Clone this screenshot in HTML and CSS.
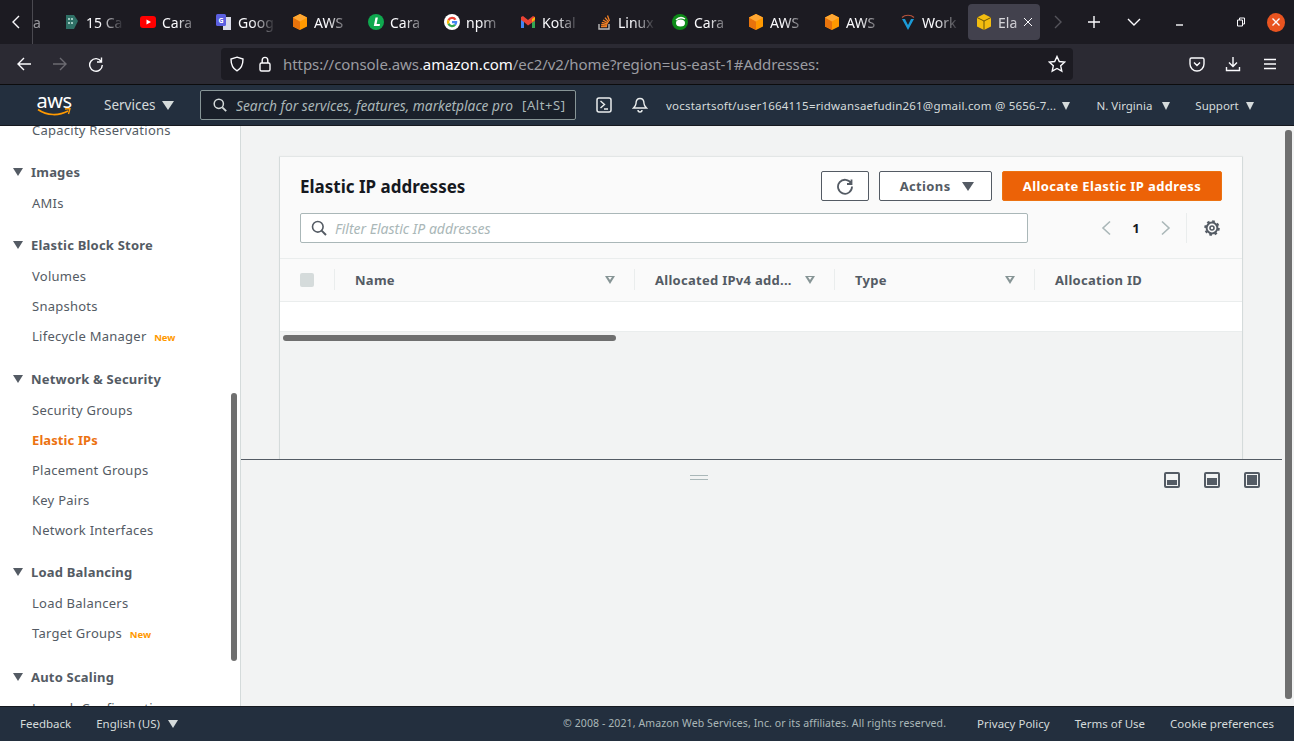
FILE: index.html
```html
<!DOCTYPE html>
<html lang="en">
<head>
  <meta charset="UTF-8">
  <meta name="viewport" content="width=device-width, initial-scale=1.0">
  <title>Elastic IP addresses</title>
  <link rel="stylesheet" href="styles.css">
</head>
<body>
  <svg class="defs" width="0" height="0">
    <symbol id="cube" viewBox="0 0 16 16">
      <path d="M8 0l7 3.600v8.800L8 16l-7-3.600V3.600z" fill="#f90"/>
      <path d="M8 7.400V16l-7-3.600V3.600z" fill="#e8730c"/>
      <path d="M8 7.400L1 3.600 8 0l7 3.600z" fill="#ffa733"/>
    </symbol>
  </svg>

  <!-- tabs -->
  <div class="tabbar">
    <span class="tabs-back">
      <svg width="16" height="16" viewBox="0 0 16 16"><path d="M11 2L5 8l6 6" class="ln"/></svg>
    </span>
    <div class="tabs">
      <div class="tab tab-cut"><span class="tab-text-end">a</span></div>
      <div class="tab">
        <svg class="fav" viewBox="0 0 16 16"><path d="M2 1h8l4 6-4 8H2z" fill="#2f7066"/><path d="M4 4h2v2H4zM7 4h2v2H7zM4 8h2v2H4zM7 8h2v2H7z" fill="#9fc9c0"/></svg>
        <span class="tab-text">15 Ca</span>
      </div>
      <div class="tab">
        <svg class="fav" viewBox="0 0 16 16"><rect y="2" width="16" height="12" rx="3" fill="#f00"/><path d="M6.500 5.500L11 8l-4.500 2.500z" fill="#fff"/></svg>
        <span class="tab-text">Cara</span>
      </div>
      <div class="tab">
        <svg class="fav" viewBox="0 0 16 16"><path d="M7 3h8v13H7z" fill="#d9dbe8"/><rect width="10" height="12" rx="1.500" fill="#5b5fe0"/><text x="5" y="9" class="fav-g">G</text></svg>
        <span class="tab-text">Goog</span>
      </div>
      <div class="tab"><svg class="fav"><use href="#cube"/></svg><span class="tab-text">AWS</span></div>
      <div class="tab">
        <svg class="fav" viewBox="0 0 16 16"><circle cx="8" cy="8" r="8" fill="#0fa84f"/><path d="M7.500 3.500h2.400L8.600 10H12l-.4 2H5.800z" fill="#fff"/></svg>
        <span class="tab-text">Cara</span>
      </div>
      <div class="tab">
        <svg class="fav" viewBox="0 0 16 16"><circle cx="8" cy="8" r="8" fill="#fff"/><path d="M12.500 5.200A5.200 5.200 0 0 0 8 2.800a5.200 5.200 0 0 0-4.500 2.600l2 1.500A2.700 2.700 0 0 1 10.300 6.300z" fill="#ea4335"/><path d="M3.500 5.400a5.200 5.200 0 0 0 0 5.200l2-1.500a2.700 2.700 0 0 1 0-2.200z" fill="#fbbc05"/><path d="M3.500 10.600A5.200 5.200 0 0 0 12 11.500l-1.900-1.500A2.700 2.700 0 0 1 5.500 9.100z" fill="#34a853"/><path d="M13.200 7H8v2.200h2.900A2.700 2.700 0 0 1 10.100 10l1.900 1.500A5.200 5.200 0 0 0 13.200 7z" fill="#4285f4"/></svg>
        <span class="tab-text">npm</span>
      </div>
      <div class="tab">
        <svg class="fav" viewBox="0 0 16 16"><path d="M1 3v11h3V7z" fill="#4285f4"/><path d="M15 3v11h-3V7z" fill="#34a853"/><path d="M1 3l2-1 5 4 5-4 2 1v4l-2 1-5 3.500L4 8 1 6z" fill="#ea4335"/><path d="M12 8l3-2.500V3l-3 2z" fill="#fbbc05"/></svg>
        <span class="tab-text">Kotal</span>
      </div>
      <div class="tab">
        <svg class="fav" viewBox="0 0 16 16"><path d="M3 10v5h10v-5" fill="none" stroke="#bcbbbb" stroke-width="1.400"/><path d="M5 12.500h6M5.200 10.500l6 .6M5.800 8.300l5.800 1.500M7 6l5.200 3M9 3.600l3.800 4.600M11.500 1.500l2 5.500" stroke="#f48024" stroke-width="1.300" fill="none"/></svg>
        <span class="tab-text">Linux</span>
      </div>
      <div class="tab">
        <svg class="fav" viewBox="0 0 16 16"><circle cx="8" cy="8" r="8" fill="#0c8a17"/><ellipse cx="8.500" cy="9" rx="4.500" ry="3.500" fill="#fff"/><path d="M4 6c3-3 6-3 9-1" stroke="#fff" stroke-width="1.500" fill="none"/></svg>
        <span class="tab-text">Cara</span>
      </div>
      <div class="tab"><svg class="fav"><use href="#cube"/></svg><span class="tab-text">AWS</span></div>
      <div class="tab"><svg class="fav"><use href="#cube"/></svg><span class="tab-text">AWS</span></div>
      <div class="tab">
        <svg class="fav" viewBox="0 0 16 16"><path d="M2 5l6 11 6-11h-3l-3 6-3-6z" fill="#1b9ad6"/><path d="M2 3.500C5 .5 11 .5 14 3.500" stroke="#b5533c" stroke-width="1.200" fill="none"/></svg>
        <span class="tab-text">Work</span>
      </div>
      <div class="tab tab-active">
        <svg class="fav" viewBox="0 0 16 16"><path d="M8 0l7 3.500v9L8 16l-7-3.500v-9z" fill="#f3bd10"/><path d="M1 3.500L8 7l7-3.500M8 7v9" stroke="#5e4a08" stroke-width=".9" fill="none"/></svg>
        <span class="tab-text tab-text-short">Ela</span>
        <svg class="tab-close" width="10" height="10" viewBox="0 0 10 10"><path d="M1 1l8 8M9 1L1 9" class="ln ln-thin"/></svg>
      </div>
    </div>
    <div class="tabs-tools">
      <svg class="tool-next" width="16" height="16" viewBox="0 0 16 16"><path d="M5 2l6 6-6 6" stroke="#55545b" stroke-width="1.400" fill="none"/></svg>
      <svg class="tool-plus" width="14" height="14" viewBox="0 0 14 14"><path d="M7 1v12M1 7h12" class="ln"/></svg>
      <svg class="tool-list" width="14" height="14" viewBox="0 0 14 14"><path d="M1 4l6 6 6-6" class="ln"/></svg>
    </div>
    <div class="winbtns">
      <svg width="10" height="10" viewBox="0 0 10 10"><path d="M1 8h7" class="ln"/></svg>
      <svg width="10" height="10" viewBox="0 0 10 10"><path d="M1.500 3h5v6h-5zM3.500 3V1h5v6h-2" class="ln ln-thin"/></svg>
      <span class="win-close"><svg width="10" height="10" viewBox="0 0 10 10"><path d="M1.500 1.500l7 7M8.500 1.500l-7 7" class="ln"/></svg></span>
    </div>
  </div>

  <!-- browser nav -->
  <div class="navbar">
    <div class="nav-btns">
      <svg width="16" height="16" viewBox="0 0 16 16"><path d="M15 8H2M8 2L2 8l6 6" class="ln"/></svg>
      <svg width="16" height="16" viewBox="0 0 16 16"><path d="M1 8h13M8 2l6 6-6 6" stroke="#6c6b72" stroke-width="1.400" fill="none"/></svg>
      <svg width="16" height="16" viewBox="0 0 16 16"><path d="M13.500 1.500V6H9M13.300 5.500A6.300 6.300 0 1 0 14.300 9" class="ln"/></svg>
    </div>
    <div class="urlbar">
      <svg class="url-shield" width="16" height="16" viewBox="0 0 16 16"><path d="M8 1.200l6 1.800c0 6-1.500 9.500-6 11.800C3.500 12.500 2 9 2 3z" class="ln"/></svg>
      <svg class="url-lock" width="14" height="16" viewBox="0 0 14 16"><rect x="2" y="7" width="10" height="8" rx="1.500" class="ln"/><path d="M4.200 7V4.200a2.800 2.800 0 0 1 5.600 0V7" class="ln"/></svg>
      <span class="url-text">https://console.aws.<b>amazon.com</b>/ec2/v2/home?region=us-east-1#Addresses:</span>
      <svg class="url-star" width="18" height="18" viewBox="0 0 18 18"><path d="M9 1.500l2.300 5 5.400.6-4 3.700 1.100 5.400L9 13.500l-4.800 2.700 1.100-5.400-4-3.700 5.400-.6z" class="ln"/></svg>
    </div>
    <div class="nav-right">
      <svg width="16" height="16" viewBox="0 0 16 16"><path d="M2.500 2h11A1.500 1.500 0 0 1 15 3.500V8A7 7 0 0 1 1 8V3.500A1.500 1.500 0 0 1 2.500 2zM5 6.500l3 3 3-3" class="ln"/></svg>
      <svg width="16" height="16" viewBox="0 0 16 16"><path d="M8 1v9M4 6.500L8 10.500l4-4M1.500 11v3.500h13V11" class="ln"/></svg>
      <svg class="nav-menu" width="14" height="14" viewBox="0 0 14 14"><path d="M1 2.500h12M1 7h12M1 11.500h12" class="ln"/></svg>
    </div>
  </div>

  <!-- aws header -->
  <header class="awsbar">
    <div class="aws-logo">
      <span class="aws-word">aws</span>
      <svg width="34" height="9" viewBox="0 0 34 9"><path d="M1 1.500c9 6.500 21 6.500 30 1.500" stroke="#f90" stroke-width="1.600" fill="none"/><path d="M28 1l5-.5L31.500 6" stroke="#f90" stroke-width="1.400" fill="none"/></svg>
    </div>
    <span class="aws-services">Services <i class="caret caret-lt"></i></span>
    <div class="aws-search">
      <svg width="14" height="14" viewBox="0 0 14 14"><circle cx="5.800" cy="5.800" r="4.600" stroke="#d5dbdb" stroke-width="1.500" fill="none"/><path d="M9.300 9.300L13.200 13.200" stroke="#d5dbdb" stroke-width="1.800"/></svg>
      <span class="aws-search-text">Search for services, features, marketplace pro</span>
      <span class="aws-search-key">[Alt+S]</span>
    </div>
    <svg class="aws-term" width="16" height="16" viewBox="0 0 16 16"><rect x="1" y="1" width="14" height="14" rx="2" stroke="#eaeded" stroke-width="1.500" fill="none"/><path d="M4.500 4l4 3.500-4 3.500M8 12h4" stroke="#eaeded" stroke-width="1.400" fill="none"/></svg>
    <svg class="aws-bell" width="16" height="16" viewBox="0 0 16 16"><path d="M8 1.500c3 0 4 2.500 4 5 0 2 1 3 2.500 4.500h-13C3 9.500 4 8.500 4 6.500c0-2.500 1-5 4-5zM6 13a2 2 0 0 0 4 0" stroke="#eaeded" stroke-width="1.400" fill="none"/></svg>
    <span class="aws-account">vocstartsoft/user1664115=ridwansaefudin261@gmail.com @ 5656-7... <i class="caret caret-sm"></i></span>
    <span class="aws-region">N. Virginia <i class="caret caret-sm"></i></span>
    <span class="aws-support">Support <i class="caret caret-sm"></i></span>
  </header>

  <div class="main">
    <nav class="sidebar">
      <div class="side-scroll">
        <div class="side-group side-first">
          <a class="side-item">Capacity Reservations</a>
        </div>
        <div class="side-group">
          <h4 class="side-head"><i class="caret caret-dk"></i>Images</h4>
          <a class="side-item">AMIs</a>
        </div>
        <div class="side-group">
          <h4 class="side-head"><i class="caret caret-dk"></i>Elastic Block Store</h4>
          <a class="side-item">Volumes</a>
          <a class="side-item">Snapshots</a>
          <a class="side-item">Lifecycle Manager <em>New</em></a>
        </div>
        <div class="side-group side-push1">
          <h4 class="side-head"><i class="caret caret-dk"></i>Network &amp; Security</h4>
          <a class="side-item">Security Groups</a>
          <a class="side-item side-active">Elastic IPs</a>
          <a class="side-item">Placement Groups</a>
          <a class="side-item">Key Pairs</a>
          <a class="side-item">Network Interfaces</a>
        </div>
        <div class="side-group">
          <h4 class="side-head"><i class="caret caret-dk"></i>Load Balancing</h4>
          <a class="side-item">Load Balancers</a>
          <a class="side-item">Target Groups <em>New</em></a>
        </div>
        <div class="side-group side-push2">
          <h4 class="side-head"><i class="caret caret-dk"></i>Auto Scaling</h4>
          <a class="side-item">Launch Configurations</a>
        </div>
      </div>
      <span class="side-thumb"></span>
    </nav>

    <section class="content">
      <div class="upper">
        <div class="card">
          <div class="card-head">
            <div class="card-row">
              <h1 class="card-title">Elastic IP addresses</h1>
              <button class="btn btn-icon"><svg width="18" height="18" viewBox="0 0 18 18"><path d="M15.500 2.500V7H11M15.200 6.500A7 7 0 1 0 16 9.500" stroke="#545b64" stroke-width="1.800" fill="none"/></svg></button>
              <button class="btn btn-actions">Actions <i class="caret caret-dk caret-lg"></i></button>
              <button class="btn btn-primary">Allocate Elastic IP address</button>
            </div>
            <div class="card-row card-row-filter">
              <div class="filter">
                <svg width="16" height="16" viewBox="0 0 16 16"><circle cx="6.800" cy="6.800" r="5.300" stroke="#545b64" stroke-width="1.600" fill="none"/><path d="M10.600 10.600L15 15" stroke="#545b64" stroke-width="2"/></svg>
                <span>Filter Elastic IP addresses</span>
              </div>
              <div class="pager">
                <svg width="12" height="16" viewBox="0 0 12 16"><path d="M10 1.500L3 8l7 6.500" stroke="#aab7b8" stroke-width="1.600" fill="none"/></svg>
                <b>1</b>
                <svg width="12" height="16" viewBox="0 0 12 16"><path d="M2 1.500L9 8l-7 6.500" stroke="#aab7b8" stroke-width="1.600" fill="none"/></svg>
              </div>
              <div class="prefs">
                <svg width="16" height="16" viewBox="0 0 16 16"><circle cx="8" cy="8" r="5.400" stroke="#545b64" stroke-width="2" fill="none"/><circle cx="8" cy="8" r="6.800" stroke="#545b64" stroke-width="2" stroke-dasharray="2.600 2.740" fill="none"/><circle cx="8" cy="8" r="2" stroke="#545b64" stroke-width="1.600" fill="none"/></svg>
              </div>
            </div>
          </div>
          <div class="thead">
            <div class="th th-check"><span class="check"></span></div>
            <div class="th"><span class="th-label">Name</span><i class="sort"></i></div>
            <div class="th"><span class="th-label">Allocated IPv4 add...</span><i class="sort"></i></div>
            <div class="th"><span class="th-label">Type</span><i class="sort"></i></div>
            <div class="th"><span class="th-label">Allocation ID</span></div>
          </div>
          <div class="tbody"></div>
          <div class="hscroll"><span class="hthumb"></span></div>
        </div>
      </div>
      <div class="split">
        <span class="split-grip"></span>
        <div class="split-tools">
          <span class="pos"><i class="pos-low"></i></span>
          <span class="pos"><i class="pos-mid"></i></span>
          <span class="pos"><i class="pos-full"></i></span>
        </div>
      </div>
      <span class="main-thumb"></span>
    </section>
  </div>

  <footer class="footer">
    <a class="foot-feedback">Feedback</a>
    <a class="foot-lang">English (US) <i class="caret caret-lt"></i></a>
    <span class="foot-copy">© 2008 - 2021, Amazon Web Services, Inc. or its affiliates. All rights reserved.</span>
    <a class="foot-link foot-first">Privacy Policy</a>
    <a class="foot-link">Terms of Use</a>
    <a class="foot-link">Cookie preferences</a>
  </footer>
</body>
</html>
```

FILE: styles.css
```css
* {
  margin: 0;
  padding: 0;
  box-sizing: border-box;
}

html, body {
  height: 741px;
  overflow: hidden;
}

body {
  display: flex;
  flex-direction: column;
  font-family: "Noto Sans", "Liberation Sans", sans-serif;
  font-size: 13px;
  color: #545b64;
  background-color: #f2f3f3;
}

.defs {
  position: absolute;
}

.ln {
  stroke: #fbfbfe;
  stroke-width: 1.400;
  fill: none;
}

.ln-thin {
  stroke-width: 1;
}

/* carets */
.caret {
  display: inline-block;
  width: 0;
  height: 0;
  border-left: 6px solid transparent;
  border-right: 6px solid transparent;
  border-top: 9px solid #d5dbdb;
}

.caret-lt {
  border-left-width: 5px;
  border-right-width: 5px;
  border-top-width: 8px;
}

.caret-sm {
  border-left-width: 4.500px;
  border-right-width: 4.500px;
  border-top-width: 8px;
}

.caret-dk {
  border-top-color: #545b64;
  border-left-width: 5px;
  border-right-width: 5px;
  border-top-width: 8px;
}

/* browser tabs */
.tabbar {
  display: flex;
  align-items: center;
  height: 44px;
  flex: none;
  background-color: #1c1b22;
  overflow: hidden;
}

.tabs-back {
  display: flex;
  width: 33px;
  height: 44px;
  flex: none;
  align-items: center;
  justify-content: center;
  border-right: 1px solid #4a4950;
}

.tabs {
  display: flex;
  width: 1064px;
  flex: none;
  margin-left: -53px;
}

.tab {
  display: flex;
  align-items: center;
  gap: 6px;
  width: 72px;
  height: 36px;
  flex: none;
  margin-right: 4px;
  padding-left: 8px;
  border-radius: 4px;
  color: #fbfbfe;
  font-size: 14px;
  overflow: hidden;
}

.tab-cut {
  padding-left: 53px;
}

.tab-text-end {
  opacity: .55;
}

.fav {
  width: 16px;
  height: 16px;
  flex: none;
}

.fav-g {
  font-family: "Noto Sans", sans-serif;
  font-size: 7px;
  font-weight: 700;
  fill: #fff;
  text-anchor: middle;
}

.tab-text {
  white-space: nowrap;
  overflow: hidden;
  flex: 1;
  -webkit-mask-image: linear-gradient(to right, #000 14px, transparent 38px);
  mask-image: linear-gradient(to right, #000 14px, transparent 38px);
}

.tab-active {
  background-color: #42414d;
}

.tab-text-short {
  flex: none;
  width: 20px;
  margin-right: -1px;
  opacity: .8;
}

.tab-close {
  flex: none;
}

.tabs-tools {
  display: flex;
  align-items: center;
  margin-left: 6px;
}

.tool-plus {
  margin-left: 21px;
}

.tool-list {
  margin-left: 26px;
}

.winbtns {
  display: flex;
  align-items: center;
  margin-left: auto;
  margin-right: 9px;
  gap: 51px;
}

.win-close {
  display: flex;
  width: 18px;
  height: 19px;
  align-items: center;
  justify-content: center;
  border-radius: 50%;
  background-color: #e95420;
  margin-left: -30px;
}

/* browser nav */
.navbar {
  display: flex;
  align-items: center;
  height: 41px;
  flex: none;
  padding: 0 0 1px 16px;
  background-color: #2b2a33;
  border-bottom: 1px solid #0c0c0d;
}

.nav-btns {
  display: flex;
  gap: 20px;
  width: 205px;
  flex: none;
}

.urlbar {
  display: flex;
  align-items: center;
  width: 852px;
  height: 32px;
  flex: none;
  padding: 0 7px 0 8px;
  border-radius: 4px;
  background-color: #1c1b22;
}

.url-lock {
  margin-left: 13px;
}

.url-text {
  margin-left: 11px;
  font-size: 15px;
  letter-spacing: -.07px;
  color: #9b9ba1;
  white-space: nowrap;
}

.url-text b {
  font-weight: 400;
  color: #fbfbfe;
}

.url-star {
  margin-left: auto;
}

.nav-right {
  display: flex;
  align-items: center;
  gap: 20px;
  margin-left: 116px;
}

.nav-menu {
  margin-left: 2px;
}

/* aws header */
.awsbar {
  display: flex;
  align-items: center;
  height: 41px;
  flex: none;
  background-color: #232f3e;
  border-bottom: 1px solid #16191f;
  color: #d5dbdb;
  font-size: 13px;
  white-space: nowrap;
}

.aws-logo {
  display: flex;
  flex-direction: column;
  align-items: center;
  width: 34px;
  margin-left: 37px;
  color: #fff;
}

.aws-word {
  font-size: 20px;
  line-height: 16px;
  letter-spacing: -.5px;
}

.aws-logo svg {
  margin-top: -1px;
}

.aws-services {
  margin-left: 33px;
  font-size: 13.500px;
}

.aws-services .caret {
  margin-left: 3px;
  border-left-width: 6px;
  border-right-width: 6px;
  border-top-width: 9px;
}

.aws-search {
  display: flex;
  align-items: center;
  width: 376px;
  height: 30px;
  margin-left: 26px;
  padding: 0 9px 0 12px;
  border: 1px solid #879596;
  border-radius: 2px;
  background-color: #1a202a;
}

.aws-search svg {
  flex: none;
}

.aws-search-text {
  width: 277px;
  margin: 0 9px;
  overflow: hidden;
  flex: none;
  font-size: 13.750px;
  color: #aab7b8;
  font-style: italic;
}

.aws-search-key {
  letter-spacing: .6px;
  color: #aab7b8;
}

.aws-term {
  margin-left: 20px;
}

.aws-bell {
  margin-left: 20px;
}

.aws-account {
  margin-left: 18px;
  font-size: 11.500px;
  letter-spacing: .2px;
}

.aws-account .caret {
  margin-left: 3px;
}

.aws-region {
  margin-left: 26px;
  font-size: 11.500px;
}

.aws-region .caret {
  margin-left: 7px;
}

.aws-support {
  margin-left: 25px;
  font-size: 11.500px;
}

.aws-support .caret {
  margin-left: 4px;
}

/* layout */
.main {
  display: flex;
  flex: 1;
  min-height: 0;
}

.sidebar {
  position: relative;
  width: 241px;
  flex: none;
  overflow: hidden;
  background-color: #fff;
  border-right: 1px solid #d5dbdb;
}

.side-scroll {
  display: flex;
  flex-direction: column;
  gap: 12px;
  padding-left: 13px;
  margin-top: -11px;
}

.side-group {
  display: flex;
  flex-direction: column;
}

.side-push1 {
  margin-top: 1px;
}

.side-push2 {
  margin-top: 2px;
}

.side-head {
  display: flex;
  align-items: center;
  gap: 8px;
  height: 30px;
  font-size: 13px;
  font-weight: 700;
  letter-spacing: .2px;
  color: #545b64;
}

.side-item {
  display: block;
  height: 30px;
  line-height: 30px;
  padding-left: 19px;
  font-size: 13px;
  letter-spacing: .25px;
  color: #545b64;
  white-space: nowrap;
}

.side-head + .side-item {
  height: 31px;
  line-height: 32px;
}

.side-item em {
  margin-left: 4px;
  font-style: normal;
  font-size: 9.500px;
  font-weight: 700;
  letter-spacing: 0;
  color: #f90;
}

.side-active {
  font-weight: 700;
  letter-spacing: .1px;
  color: #ec7211;
}

.side-thumb {
  position: absolute;
  left: 231px;
  top: 267px;
  width: 6px;
  height: 268px;
  border-radius: 3px;
  background-color: #6f6f6f;
}

/* content */
.content {
  position: relative;
  display: flex;
  flex-direction: column;
  flex: 1;
  min-width: 0;
}

.upper {
  height: 333px;
  flex: none;
  overflow: hidden;
  padding: 31px 0 0 38px;
}

.card {
  width: 964px;
  height: 400px;
  background-color: #f2f3f3;
  border-left: 1px solid #d5dbdb;
  border-right: 1px solid #d5dbdb;
  box-shadow: 0 -1px 1px rgba(0, 28, 36, .06);
}

.card-head {
  height: 102px;
  padding: 14px 20px 0 20px;
  background-color: #fafafa;
  border-bottom: 1px solid #eaeded;
}

.card-row {
  display: flex;
  align-items: center;
  height: 30px;
}

.card-row-filter {
  margin-top: 12px;
}

.card-title {
  flex: 1;
  padding-top: 1px;
  font-size: 17px;
  line-height: 30px;
  font-weight: 700;
  color: #16191f;
}

.btn {
  height: 30px;
  border: 1px solid #545b64;
  border-radius: 2px;
  background-color: #fff;
  font-family: inherit;
  font-size: 13px;
  font-weight: 700;
  letter-spacing: .37px;
  color: #545b64;
}

.btn-icon {
  display: flex;
  width: 48px;
  align-items: center;
  justify-content: center;
}

.btn-actions {
  width: 113px;
  margin-left: 10px;
  padding-left: 3px;
}

.btn-actions .caret {
  margin-left: 8px;
  border-left-width: 6px;
  border-right-width: 6px;
  border-top-width: 9px;
}

.btn-primary {
  width: 220px;
  margin-left: 10px;
  border-color: #ec7211;
  background-color: #ec6207;
  color: #fff;
}

.filter {
  display: flex;
  align-items: center;
  gap: 8px;
  width: 728px;
  height: 30px;
  flex: none;
  padding-left: 10px;
  border: 1px solid #aab7b8;
  border-radius: 2px;
  background-color: #fff;
}

.filter span {
  font-size: 14px;
  font-style: italic;
  color: #aab7b8;
}

.pager {
  display: flex;
  align-items: center;
  justify-content: space-between;
  width: 72px;
  margin-left: 72px;
}

.pager b {
  color: #16191f;
}

.prefs {
  display: flex;
  height: 30px;
  align-items: center;
  margin-left: 14px;
  padding-left: 17px;
  border-left: 1px solid #eaeded;
}

.thead {
  display: grid;
  grid-template-columns: 54px 300px 200px 200px 1fr;
  height: 43px;
  background-color: #fafafa;
  border-bottom: 1px solid #eaeded;
}

.th {
  display: flex;
  align-items: center;
  justify-content: space-between;
  height: 21px;
  margin-top: 10px;
  padding: 0 19px 0 20px;
  border-left: 1px solid #eaeded;
  font-weight: 700;
  letter-spacing: .28px;
  white-space: nowrap;
}

.th-check {
  padding: 0 0 0 20px;
  border-left: 0;
}

.check {
  width: 14px;
  height: 14px;
  border-radius: 2px;
  background-color: #d5dbdb;
}

.sort {
  position: relative;
  width: 0;
  height: 0;
  border: 5px solid transparent;
  border-top: 8px solid #879596;
  border-bottom: 0;
}

.sort::after {
  content: "";
  position: absolute;
  left: -2px;
  top: -6.500px;
  border: 2px solid transparent;
  border-top: 3px solid #fafafa;
  border-bottom: 0;
}

.tbody {
  height: 30px;
  background-color: #fff;
  border-bottom: 1px solid #eaeded;
}

.hscroll {
  padding: 3px 0 0 3px;
}

.hthumb {
  display: block;
  width: 333px;
  height: 6px;
  border-radius: 3px;
  background-color: #6f6f6f;
}

.split {
  position: relative;
  flex: 1;
  border-top: 1px solid #545b64;
  margin-right: 12px;
}

.split-grip {
  position: absolute;
  left: 449px;
  top: 15px;
  width: 18px;
  height: 5px;
  border-top: 1px solid #aab7b8;
  border-bottom: 1px solid #aab7b8;
}

.split-tools {
  display: flex;
  justify-content: flex-end;
  gap: 24px;
  padding: 12px 22px 0 0;
}

.pos {
  display: flex;
  align-items: flex-end;
  width: 16px;
  height: 16px;
  padding: 1px;
  border: 2.500px solid #545b64;
  border-radius: 2px;
  background-color: #f2f3f3;
}

.pos i {
  display: block;
  width: 100%;
  background-color: #545b64;
}

.pos-low {
  height: 5px;
}

.pos-mid {
  height: 7px;
}

.pos-full {
  height: 100%;
}

.main-thumb {
  position: absolute;
  left: 1044px;
  top: 4px;
  width: 7px;
  height: 569px;
  border-radius: 3px;
  background-color: #6f6f6f;
}

/* footer */
.footer {
  display: flex;
  align-items: center;
  height: 35px;
  flex: none;
  padding: 0 20px 2px;
  background-color: #232f3e;
  border-top: 1px solid #16191f;
  color: #d5dbdb;
  font-size: 11.500px;
  white-space: nowrap;
}

.foot-lang {
  margin-left: 25px;
}

.foot-lang .caret {
  margin-left: 5px;
}

.foot-copy {
  margin-left: auto;
  font-size: 10.500px;
  letter-spacing: .1px;
  color: #aab7b8;
}

.foot-link {
  margin-left: 25px;
}

.foot-first {
  margin-left: 31px;
}
```
